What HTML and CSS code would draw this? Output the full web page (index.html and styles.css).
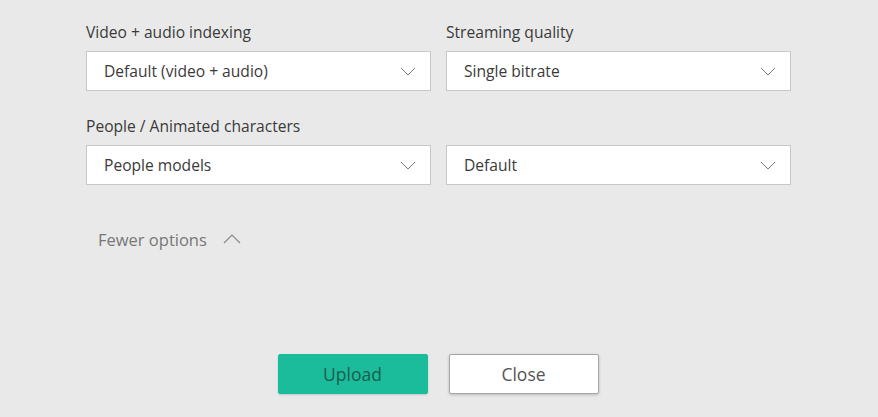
FILE: index.html
```html
<!DOCTYPE html>
<html lang="en">
<head>
    <meta charset="UTF-8">
    <title>Upload options</title>
    <link rel="stylesheet" href="styles.css">
</head>
<body>
    <div class="panel">
        <div class="options">
            <div class="field">
                <label>Video + audio indexing</label>
                <div class="dropdown">
                    <span>Default (video + audio)</span>
                    <svg class="chev" width="16" height="9" viewBox="0 0 16 9"><path d="M1 1 L8 8 L15 1" fill="none" stroke="#7a7a7a" stroke-width="1"/></svg>
                </div>
            </div>
            <div class="field">
                <label>Streaming quality</label>
                <div class="dropdown">
                    <span>Single bitrate</span>
                    <svg class="chev" width="16" height="9" viewBox="0 0 16 9"><path d="M1 1 L8 8 L15 1" fill="none" stroke="#7a7a7a" stroke-width="1"/></svg>
                </div>
            </div>
            <div class="field">
                <label>People / Animated characters</label>
                <div class="dropdown">
                    <span>People models</span>
                    <svg class="chev" width="16" height="9" viewBox="0 0 16 9"><path d="M1 1 L8 8 L15 1" fill="none" stroke="#7a7a7a" stroke-width="1"/></svg>
                </div>
            </div>
            <div class="field">
                <label>&nbsp;</label>
                <div class="dropdown">
                    <span>Default</span>
                    <svg class="chev" width="16" height="9" viewBox="0 0 16 9"><path d="M1 1 L8 8 L15 1" fill="none" stroke="#7a7a7a" stroke-width="1"/></svg>
                </div>
            </div>
        </div>

        <div class="toggle">
            <span>Fewer options</span>
            <svg width="18" height="10" viewBox="0 0 18 10"><path d="M1 9 L9 1 L17 9" fill="none" stroke="#8a8a8a" stroke-width="1.2"/></svg>
        </div>

        <div class="actions">
            <button class="btn btn-primary">Upload</button>
            <button class="btn">Close</button>
        </div>
    </div>
</body>
</html>
```

FILE: styles.css
```css
body {
    margin: 0;
    background-color: #e9e9e9;
    font-family: "Open Sans", "Noto Sans", sans-serif;
    color: #333;
}
.panel {
    width: 878px;
    height: 417px;
    box-sizing: border-box;
    padding: 21px 88px 0 86px;
}
.options {
    display: grid;
    grid-template-columns: 345px 345px;
    column-gap: 15px;
    row-gap: 24px;
}
.field label {
    display: block;
    font-size: 15.6px;
    line-height: 22px;
    height: 22px;
    margin-bottom: 8px;
    color: #3a3a3a;
}
.dropdown {
    height: 40px;
    box-sizing: border-box;
    background-color: #fff;
    border: 1px solid #c8c8c8;
    display: flex;
    align-items: center;
    justify-content: space-between;
    padding: 0 14px 0 17px;
    font-size: 15.6px;
    color: #3a3a3a;
}
.chev {
    display: block;
}
.toggle {
    display: flex;
    align-items: center;
    gap: 16px;
    margin: 39px 0 0 12px;
    height: 30px;
    font-size: 16.5px;
    color: #777;
}
.actions {
    display: flex;
    justify-content: center;
    gap: 21px;
    margin: 100px 0 0 -87px;
    width: 878px;
}
.btn {
    width: 150px;
    height: 40px;
    font-family: inherit;
    font-size: 17.5px;
    color: #555;
    background-color: #fff;
    border: 1px solid #a6a6a6;
    border-radius: 2px;
    box-shadow: 0 1px 3px rgba(0, 0, 0, 0.2);
    cursor: pointer;
}
.btn-primary {
    background-color: #1abc9c;
    border-color: #1abc9c;
    color: #1d5c4c;
    box-shadow: 0 1px 2px rgba(0, 0, 0, 0.15);
}
```
